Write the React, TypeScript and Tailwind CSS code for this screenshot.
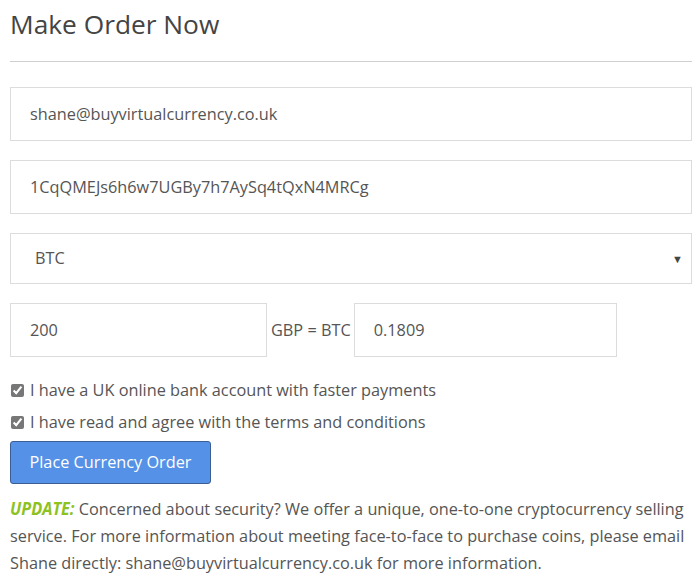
export default function App() {
  return (
    <div className="bg-white w-[700px] h-[588px] overflow-hidden px-[10px] text-[#555]" style={{ fontFamily: '"Open Sans", sans-serif' }}>
      <h2 className="text-[26.3px] leading-[48px] text-[#444] pt-0">Make Order Now</h2>
      <hr className="mt-[13px] border-0 border-t border-[#cfcfcf] w-[682px]" />
      <form className="mt-[25px] w-[682px]">
        <input
          className="block w-full h-[54px] border border-[#dcdcdc] px-[19px] text-[16.3px] text-[#555] outline-none"
          defaultValue="shane@buyvirtualcurrency.co.uk"
        />
        <input
          className="block w-full h-[54px] border border-[#dcdcdc] px-[19px] mt-[19px] text-[16.3px] text-[#555] outline-none"
          defaultValue="1CqQMEJs6h6w7UGBy7h7AySq4tQxN4MRCg"
        />
        <div className="relative mt-[19px] h-[51px] border border-[#dcdcdc] flex items-center pl-[24px] text-[16.3px]">
          <span>BTC</span>
          <span className="absolute right-[8px] top-[17px] text-[11px] text-[#444]">▼</span>
        </div>
        <div className="flex items-center mt-[19px]">
          <input
            className="block w-[257px] h-[54px] border border-[#dcdcdc] px-[19px] text-[16.3px] text-[#555] outline-none"
            defaultValue="200"
          />
          <span className="pl-[4px] pr-[3px] text-[16.3px]">GBP = BTC</span>
          <input
            className="block w-[263px] h-[54px] border border-[#dcdcdc] px-[19px] text-[16.3px] text-[#555] outline-none"
            defaultValue="0.1809"
          />
        </div>
        <label className="flex items-center mt-[17px] text-[16.3px] leading-[32px]">
          <input type="checkbox" defaultChecked className="w-[13px] h-[13px] ml-[1px] mr-[6px] accent-[#777]" />
          I have a UK online bank account with faster payments
        </label>
        <label className="flex items-center text-[16.3px] leading-[32px]">
          <input type="checkbox" defaultChecked className="w-[13px] h-[13px] ml-[1px] mr-[6px] accent-[#777]" />
          I have read and agree with the terms and conditions
        </label>
        <button
          type="button"
          className="mt-[3px] w-[201px] h-[43px] bg-[#5591e6] border border-[#3b5f93] rounded-[3px] text-white text-[16.3px]"
        >
          Place Currency Order
        </button>
        <p className="mt-[11px] text-[17px] leading-[27px] text-[#555] w-[720px] whitespace-nowrap scale-x-[0.957] origin-left">
          <b className="italic text-[#8dc21f] font-bold">UPDATE:</b> Concerned about security? We offer a unique, one-to-one cryptocurrency selling
          <br />
          service. For more information about meeting face-to-face to purchase coins, please email
          <br />
          Shane directly: shane@buyvirtualcurrency.co.uk for more information.
        </p>
      </form>
    </div>
  );
}
